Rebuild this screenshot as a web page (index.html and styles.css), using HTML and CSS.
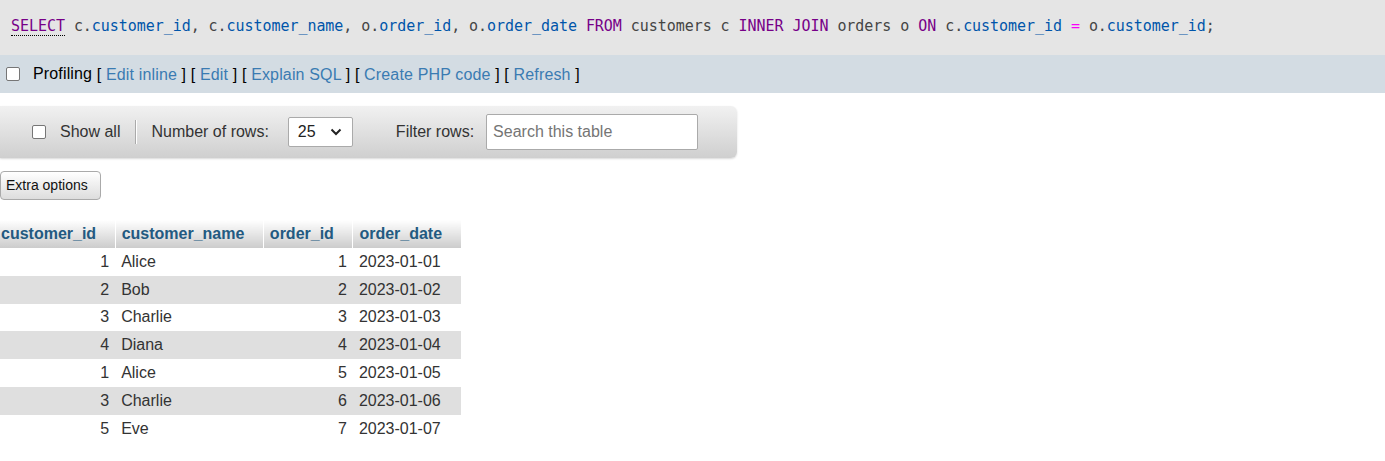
FILE: index.html
```html
<!DOCTYPE html>
<html>
<head>
<meta charset="utf-8">
<link rel="stylesheet" href="styles.css">
</head>
<body>
<div class="sql">
  <code class="sql-code"><span class="kw kw-first">SELECT</span> <span class="pl">c.</span><span class="var">customer_id</span><span class="pl">, c.</span><span class="var">customer_name</span><span class="pl">, o.</span><span class="var">order_id</span><span class="pl">, o.</span><span class="var">order_date</span> <span class="kw">FROM</span> <span class="pl">customers c</span> <span class="kw">INNER JOIN</span> <span class="pl">orders o</span> <span class="kw">ON</span> <span class="pl">c.</span><span class="var">customer_id</span> <span class="op">=</span> <span class="pl">o.</span><span class="var">customer_id</span><span class="pl">;</span></code>
</div>
<div class="profiling"><label class="prof-label"><input type="checkbox" class="cb">Profiling</label> [ <a class="lnk" href="#">Edit inline</a> ] [ <a class="lnk" href="#">Edit</a> ] [ <a class="lnk" href="#">Explain SQL</a> ] [ <a class="lnk" href="#">Create PHP code</a> ] [ <a class="lnk" href="#">Refresh</a> ]</div>
<div class="navbar">
  <label class="showall"><input type="checkbox" class="cb">Show all</label>
  <span class="sep"></span>
  <span class="navlabel">Number of rows:</span>
  <div class="select"><span>25</span><svg class="chev" width="12" height="8" viewBox="0 0 12 8"><path d="M1.5 1.5 L6 6 L10.5 1.5" fill="none" stroke="#222" stroke-width="2"/></svg></div>
  <span class="navlabel filter">Filter rows:</span>
  <div class="search">Search this table</div>
</div>
<button class="extra">Extra options</button>
<table class="data">
  <thead>
    <tr><th>customer_id</th><th>customer_name</th><th>order_id</th><th>order_date</th></tr>
  </thead>
  <tbody>
    <tr><td class="num">1</td><td>Alice</td><td class="num">1</td><td>2023-01-01</td></tr>
    <tr><td class="num">2</td><td>Bob</td><td class="num">2</td><td>2023-01-02</td></tr>
    <tr><td class="num">3</td><td>Charlie</td><td class="num">3</td><td>2023-01-03</td></tr>
    <tr><td class="num">4</td><td>Diana</td><td class="num">4</td><td>2023-01-04</td></tr>
    <tr><td class="num">1</td><td>Alice</td><td class="num">5</td><td>2023-01-05</td></tr>
    <tr><td class="num">3</td><td>Charlie</td><td class="num">6</td><td>2023-01-06</td></tr>
    <tr><td class="num">5</td><td>Eve</td><td class="num">7</td><td>2023-01-07</td></tr>
  </tbody>
</table>
</body>
</html>
```

FILE: styles.css
```css
html, body {
  margin: 0;
  padding: 0;
  background: #fff;
  font-family: "Liberation Sans", Arial, sans-serif;
  color: #333;
}

.sql {
  background: #e5e5e5;
  height: 55px;
  display: flex;
  align-items: center;
  padding: 0 0 3px 11px;
  box-sizing: border-box;
}

.sql-code {
  font-family: "DejaVu Sans Mono", "Liberation Mono", monospace;
  font-size: 15px;
  white-space: pre;
  letter-spacing: -0.05px;
}

.kw { color: #770088; }
.kw-first { border-bottom: 1px dotted #000; }
.pl { color: #444; }
.var { color: #0055aa; }
.op { color: #fa00fa; }

.profiling {
  background: #d3dce3;
  height: 38px;
  line-height: 40px;
  padding-left: 6px;
  font-size: 16px;
  color: #000;
  white-space: pre;
  letter-spacing: 0.15px;
  box-sizing: border-box;
}

.prof-label {
  display: inline-flex;
  align-items: center;
  vertical-align: top;
  height: 38px;
}

.cb {
  appearance: none;
  -webkit-appearance: none;
  width: 14px;
  height: 14px;
  border: 1px solid #767676;
  border-radius: 2px;
  background: #fff;
  margin: 0 13px 0 0;
  box-sizing: border-box;
}

.lnk {
  color: #3a7bb2;
  text-decoration: none;
}

.navbar {
  margin-top: 13px;
  width: 737px;
  height: 52px;
  box-sizing: border-box;
  border-radius: 0 6px 6px 0;
  background: linear-gradient(#f1f1f1, #cfcfcf);
  box-shadow: 0 1px 2px rgba(0,0,0,0.15);
  display: flex;
  align-items: center;
  padding-left: 32px;
  font-size: 16px;
  color: #333;
}

.showall {
  display: flex;
  align-items: center;
}

.showall .cb { margin-right: 14px; }

.sep {
  width: 1px;
  height: 24px;
  background: #aaa;
  border-right: 1px solid #fff;
  margin: 0 14px 0 15px;
}

.select {
  margin-left: 19px;
  width: 65px;
  height: 30px;
  box-sizing: border-box;
  background: #fff;
  border: 1px solid #aaa;
  border-radius: 2px;
  display: flex;
  align-items: center;
  justify-content: space-between;
  padding: 0 10px 0 9px;
  color: #222;
}

.chev { display: block; }

.filter { margin-left: 43px; }

.search {
  margin-left: 12px;
  width: 212px;
  height: 36px;
  box-sizing: border-box;
  background: #fff;
  border: 1px solid #aaa;
  border-radius: 2px;
  display: flex;
  align-items: center;
  padding-left: 6px;
  color: #757575;
}

.extra {
  display: block;
  margin: 13px 0 0 0;
  height: 29px;
  width: 101px;
  box-sizing: border-box;
  padding: 0 0 1px 5px;
  text-align: left;
  font-family: "Liberation Sans", Arial, sans-serif;
  font-size: 14px;
  color: #111;
  background: linear-gradient(#ffffff, #dddddd);
  border: 1px solid #aaa;
  border-radius: 4px;
}

.data {
  margin: 20px 0 0 -5px;
  border-collapse: collapse;
  font-size: 16px;
}

.data th {
  background: linear-gradient(#ffffff, #cccccc);
  color: #235a81;
  font-weight: bold;
  text-align: left;
  padding: 0 18.5px 0 6px;
  height: 28px;
  border-left: 1px solid #fff;
  border-right: 1px solid #fff;
  white-space: nowrap;
}

.data th:first-child { border-left: none; }

.data td {
  height: 27.8px;
  padding: 0 6px;
  color: #333;
  white-space: nowrap;
}

.data tbody tr:nth-child(even) td { background: #dfdfdf; }

.data td.num { text-align: right; }
```
